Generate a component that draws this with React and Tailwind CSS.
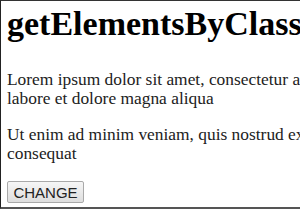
import React from 'react';

const App = () => {
  return (
    <div className="w-[300px] h-[209px] overflow-hidden bg-white border-l border-t border-b-2 border-l-[#222] border-t-[#333] border-b-[#555]">
      <div className="w-[700px] pl-[6px] font-['Liberation_Serif','Times_New_Roman',serif]">
        <h1 className="pt-[6px] text-[34px] leading-[34px] font-bold text-black font-['Liberation_Serif','Times_New_Roman',serif]">
          getElementsByClassName
        </h1>
        <p className="mt-[29px] text-[17.4px] leading-[19px] text-[#222] font-['Liberation_Serif','Times_New_Roman',serif]">
          Lorem ipsum dolor sit amet, consectetur adipiscing elit, sed do eiusmod tempor incididunt ut
          <br />
          labore et dolore magna aliqua
        </p>
        <p className="mt-[17px] text-[17.4px] leading-[19px] text-[#222] font-['Liberation_Serif','Times_New_Roman',serif]">
          Ut enim ad minim veniam, quis nostrud exercitation ullamco laboris nisi ut aliquip ex ea commodo
          <br />
          consequat
        </p>
        <button className="mt-[18px] h-[22px] w-[77px] border border-[#a9a9a9] rounded-[2px] bg-gradient-to-b from-[#f6f6f6] to-[#dedede] text-[15px] text-[#222] leading-none font-['Liberation_Sans',Arial,sans-serif]">
          CHANGE
        </button>
      </div>
    </div>
  );
};

export default App;
